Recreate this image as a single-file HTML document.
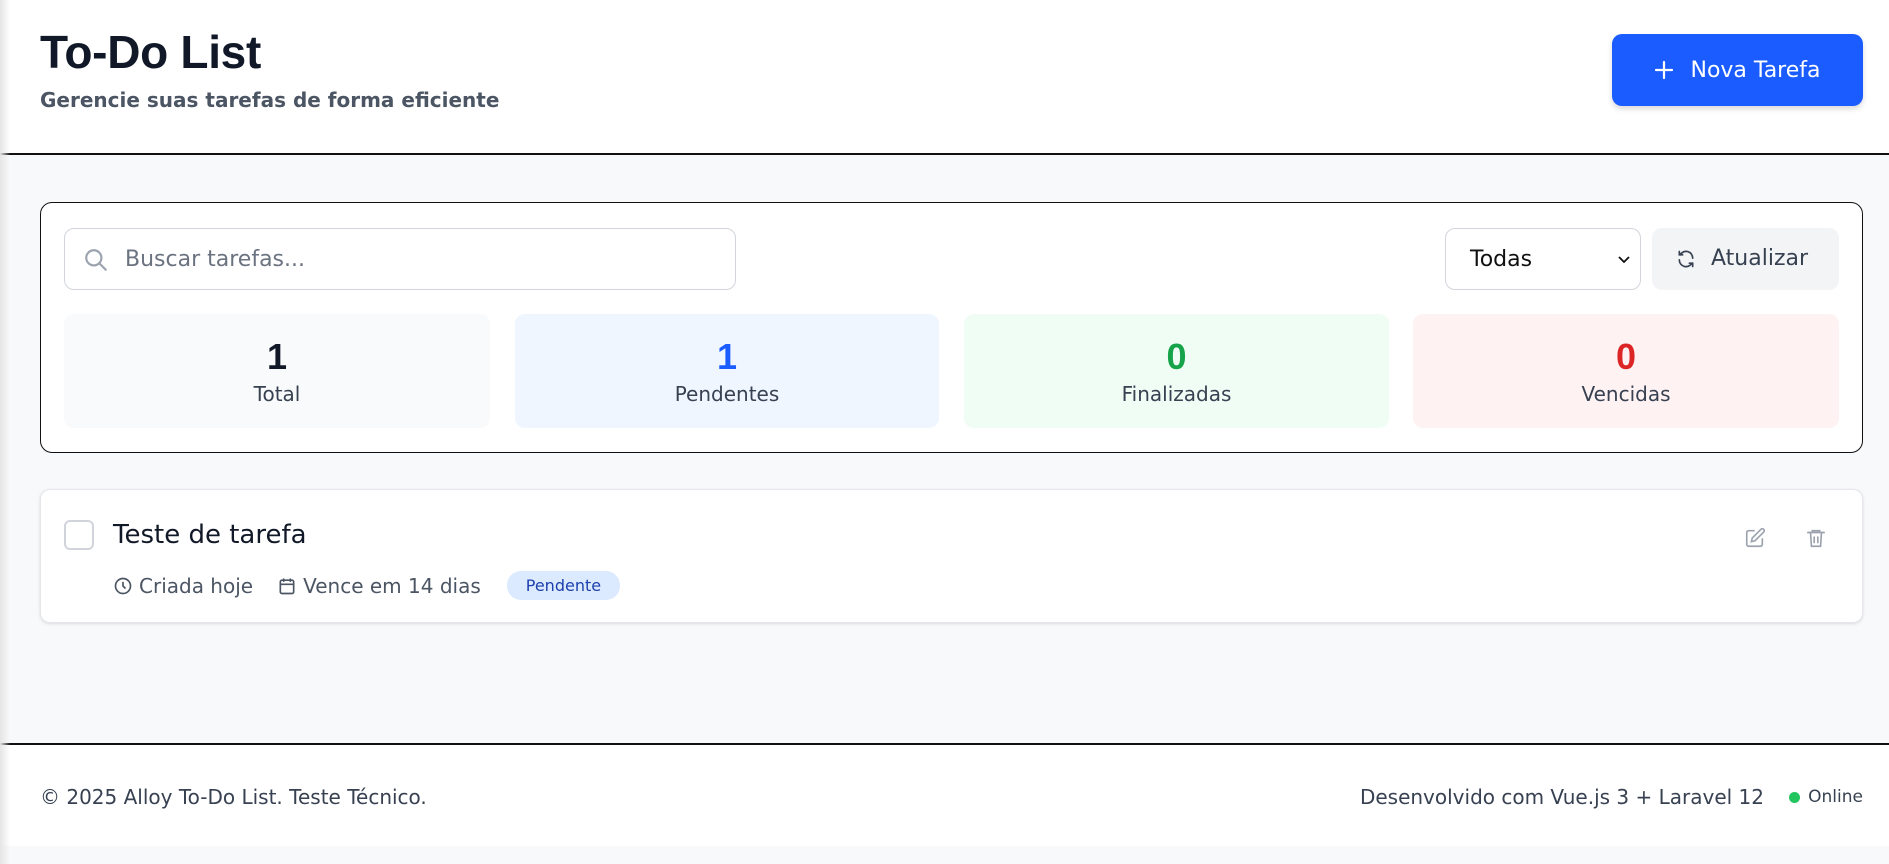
<!DOCTYPE html>
<html><head><meta charset="utf-8"><style>
*{box-sizing:border-box;margin:0;padding:0}
body{width:1889px;height:864px;overflow:hidden;background:#f8f9fb;font-family:"DejaVu Sans",sans-serif;position:relative;color:#111827}
.abs{position:absolute}
header{position:absolute;left:0;top:0;width:1889px;height:155px;background:#fff;border-bottom:2px solid #111}
h1{position:absolute;left:40px;top:25px;font-family:"Liberation Sans",sans-serif;font-size:46px;font-weight:700;color:#111827;letter-spacing:-0.3px}
.sub{position:absolute;left:40px;top:88px;font-size:20px;color:#4b5563;font-weight:600;letter-spacing:0px}
.btn{position:absolute;left:1612px;top:34px;width:251px;height:72px;background:#1a5cff;border-radius:10px;color:#fff;font-size:22px;display:flex;align-items:center;justify-content:center;gap:16px;box-shadow:0 3px 6px rgba(0,0,0,.15)}
.card{position:absolute;left:40px;top:202px;width:1823px;height:251px;background:#fff;border:1px solid #111;border-radius:12px}
.input{position:absolute;left:64px;top:228px;width:672px;height:62px;border:1px solid #d1d5db;border-radius:10px;background:#fff}
.stat{position:absolute;top:314px;height:114px;border-radius:10px;text-align:center}
.stat b{display:block;font-family:"Liberation Sans",sans-serif;font-size:36px;margin-top:23px;line-height:40px}
.stat span{display:block;font-size:20px;color:#374151;margin-top:5px}
.task{position:absolute;left:40px;top:489px;width:1823px;height:134px;background:#fff;border:1px solid #e5e7eb;border-radius:10px;box-shadow:0 1px 3px rgba(0,0,0,.12)}
footer{position:absolute;left:0;top:743px;width:1889px;height:103px;background:#fff;border-top:2px solid #111;font-size:20px;color:#374151}
</style></head><body>
<div class="abs" style="left:0;top:0;width:10px;height:864px;background:linear-gradient(90deg,#e5e5e5,rgba(255,255,255,0));z-index:5"></div>
<header>
<h1>To-Do List</h1>
<div class="sub">Gerencie suas tarefas de forma eficiente</div>
<div class="btn"><svg width="20" height="20" viewBox="0 0 20 20"><path d="M10 2v16M2 10h16" stroke="#fff" stroke-width="2.2" stroke-linecap="round"/></svg>Nova Tarefa</div>
</header>
<div class="card"></div>
<div class="input"><svg class="abs" style="left:18px;top:18px" width="26" height="26" viewBox="0 0 24 24" fill="none" stroke="#9ca3af" stroke-width="2"><circle cx="10" cy="10" r="7"/><path d="M15 15l6 6" stroke-linecap="round"/></svg><span class="abs" style="left:60px;top:18px;font-size:22px;color:#6b7280">Buscar tarefas...</span></div>
<div class="abs" style="left:1445px;top:228px;width:196px;height:62px;border:1px solid #d1d5db;border-radius:10px;background:#fff"><span class="abs" style="left:24px;top:18px;font-size:22px;color:#111">Todas</span><svg class="abs" style="left:172px;top:26px" width="12" height="10" viewBox="0 0 12 10"><path d="M1 2l5 5 5-5" stroke="#111" stroke-width="1.8" fill="none"/></svg></div>
<div class="abs" style="left:1652px;top:228px;width:187px;height:62px;border-radius:10px;background:#f3f4f6;font-size:22px;color:#374151"><svg class="abs" style="left:24px;top:21px" width="20" height="20" viewBox="0 0 24 24" fill="none" stroke="#374151" stroke-width="2" stroke-linecap="round"><path d="M20 11A8 8 0 0 0 5 7M4 3v4h4M4 13a8 8 0 0 0 15 4M20 21v-4h-4"/></svg><span class="abs" style="left:59px;top:18px">Atualizar</span></div>
<div class="stat" style="left:64px;width:426px;background:#f9fafb"><b style="color:#111827">1</b><span>Total</span></div>
<div class="stat" style="left:515px;width:424px;background:#eff6ff"><b style="color:#1a5cff">1</b><span>Pendentes</span></div>
<div class="stat" style="left:964px;width:425px;background:#f0fdf4"><b style="color:#16a34a">0</b><span>Finalizadas</span></div>
<div class="stat" style="left:1413px;width:426px;background:#fef2f2"><b style="color:#dc2626">0</b><span>Vencidas</span></div>
<div class="task">
<div class="abs" style="left:23px;top:30px;width:30px;height:30px;border:2px solid #d1d5db;border-radius:6px"></div>
<div class="abs" style="left:72px;top:30px;font-size:26px;color:#111827">Teste de tarefa</div>
<div class="abs" style="left:72px;top:81px;font-size:20px;color:#4b5563;display:flex;align-items:center;gap:6px">
<svg width="20" height="20" viewBox="0 0 24 24" fill="none" stroke="#4b5563" stroke-width="2"><circle cx="12" cy="12" r="9"/><path d="M12 7v5l3 3"/></svg>Criada hoje
<svg style="margin-left:18px" width="20" height="20" viewBox="0 0 24 24" fill="none" stroke="#4b5563" stroke-width="2"><rect x="4" y="5" width="16" height="16" rx="2"/><path d="M8 3v4M16 3v4M4 10h16"/></svg>Vence em 14 dias
<span style="margin-left:20px;background:#dbeafe;color:#1e40af;font-size:16px;padding:5px 19px;border-radius:14px">Pendente</span></div>
<svg class="abs" style="left:1703px;top:37px" width="22" height="22" viewBox="0 0 24 24" fill="none" stroke="#9ca3af" stroke-width="1.8" stroke-linecap="round"><path d="M11 4H5a2 2 0 0 0-2 2v13a2 2 0 0 0 2 2h13a2 2 0 0 0 2-2v-6"/><path d="M18.5 2.5a2.1 2.1 0 0 1 3 3L12 15l-4 1 1-4z"/></svg>
<svg class="abs" style="left:1764px;top:37px" width="22" height="22" viewBox="0 0 24 24" fill="none" stroke="#9ca3af" stroke-width="1.8" stroke-linecap="round"><path d="M3 6h18M8 6V4h8v2M6 6l1 15h10l1-15M10 11v6M14 11v6"/></svg>
</div>
<footer>
<div class="abs" style="left:40px;top:40px">© 2025 Alloy To-Do List. Teste Técnico.</div>
<div class="abs" style="right:125px;top:40px">Desenvolvido com Vue.js 3 + Laravel 12</div>
<div class="abs" style="left:1789px;top:47px;width:11px;height:11px;border-radius:50%;background:#22c55e"></div>
<div class="abs" style="right:26px;top:42px;font-size:17px">Online</div>
</footer>
</body></html>
